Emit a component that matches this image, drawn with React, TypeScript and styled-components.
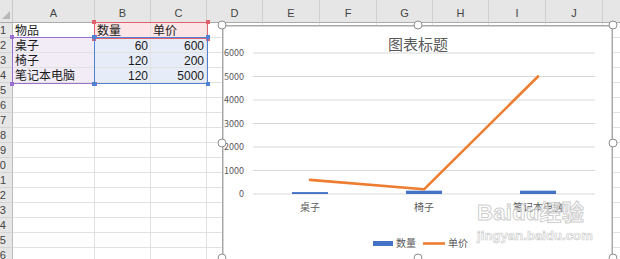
import styled, { createGlobalStyle } from "styled-components";

const GlobalStyle = createGlobalStyle`
  html, body {
    margin: 0;
    padding: 0;
    background: #ffffff;
    overflow: hidden;
  }
`;

const COLS = [
  { key: "A", w: 82 },
  { key: "B", w: 56 },
  { key: "C", w: 56 },
  { key: "D", w: 56 },
  { key: "E", w: 57 },
  { key: "F", w: 57 },
  { key: "G", w: 56 },
  { key: "H", w: 56 },
  { key: "I", w: 57 },
  { key: "J", w: 57 },
  { key: "K", w: 60 },
];
const ROW_COUNT = 16;

type Tone = "red" | "purple" | "blue";
type CellData = { text: string | number; tone?: Tone; num?: boolean };

const DATA: CellData[][] = [
  [{ text: "物品" }, { text: "数量", tone: "red" }, { text: "单价", tone: "red" }],
  [{ text: "桌子", tone: "purple" }, { text: 60, tone: "blue", num: true }, { text: 600, tone: "blue", num: true }],
  [{ text: "椅子", tone: "purple" }, { text: 120, tone: "blue", num: true }, { text: 200, tone: "blue", num: true }],
  [{ text: "笔记本电脑", tone: "purple" }, { text: 120, tone: "blue", num: true }, { text: 5000, tone: "blue", num: true }],
];

const FILL: Record<Tone, string> = {
  red: "#fbe5e6",
  purple: "#f1ecf6",
  blue: "#e7edf8",
};
const LINE: Record<Tone, string> = {
  red: "#e0606b",
  purple: "#9a6fcf",
  blue: "#4f82d6",
};

const Page = styled.div`
  position: relative;
  width: 620px;
  height: 259px;
  overflow: hidden;
  font-family: "Liberation Sans", "Noto Sans CJK SC", sans-serif;
`;

const Sheet = styled.div`
  display: grid;
  grid-template-columns: 13px ${COLS.map((c) => c.w + "px").join(" ")};
  grid-template-rows: 23px repeat(${ROW_COUNT}, 15px);
`;

const Corner = styled.div`
  position: relative;
  background: #e6e6e6;
  border-right: 1px solid #c9c9c9;
  border-bottom: 1px solid #ababab;
  &::after {
    content: "";
    position: absolute;
    right: 2px;
    bottom: 3px;
    border-left: 8px solid transparent;
    border-bottom: 8px solid #b8b8b8;
  }
`;

const ColHead = styled.div`
  display: flex;
  align-items: flex-end;
  justify-content: center;
  padding-bottom: 2px;
  box-sizing: border-box;
  background: #e6e6e6;
  border-right: 1px solid #d0d0d0;
  border-bottom: 1px solid #ababab;
  font-size: 11px;
  color: #444444;
  line-height: 14px;
`;

const RowHead = styled.div`
  display: flex;
  align-items: center;
  justify-content: flex-end;
  overflow: hidden;
  padding-right: 6px;
  box-sizing: border-box;
  background: #e6e6e6;
  border-right: 1px solid #bdbdbd;
  border-bottom: 1px solid #d4d4d4;
  font-size: 11px;
  color: #444444;
  line-height: 14px;
`;

const Cell = styled.div<{ $tone?: Tone; $num?: boolean }>`
  display: flex;
  align-items: center;
  justify-content: ${(p) => (p.$num ? "flex-end" : "flex-start")};
  padding: 1px 2px 0 2px;
  box-sizing: border-box;
  background: ${(p) => (p.$tone ? FILL[p.$tone] : "#ffffff")};
  border-right: 1px solid #e1e1e1;
  border-bottom: 1px solid #e1e1e1;
  font-size: 12px;
  color: #1a1a1a;
  white-space: nowrap;
  overflow: visible;
  line-height: 14px;
`;

// outline of a referenced data range, drawn over the cells
const Range = styled.div<{ $tone: Tone; $x: number; $y: number; $w: number; $h: number }>`
  position: absolute;
  left: ${(p) => p.$x}px;
  top: ${(p) => p.$y}px;
  width: ${(p) => p.$w}px;
  height: ${(p) => p.$h}px;
  box-sizing: border-box;
  border: 1.5px solid ${(p) => LINE[p.$tone]};
  pointer-events: none;
`;

const Knob = styled.span<{ $tone: Tone; $at: string }>`
  position: absolute;
  width: 4px;
  height: 4px;
  background: ${(p) => LINE[p.$tone]};
  ${(p) => (p.$at.includes("t") ? "top: -3px;" : "bottom: -3px;")}
  ${(p) => (p.$at.includes("l") ? "left: -3px;" : "right: -3px;")}
`;

// floating chart object over the sheet
const ChartBox = styled.div`
  position: absolute;
  left: 222px;
  top: 25px;
  width: 391px;
  height: 236px;
  background: #ffffff;
  box-shadow: inset 0 0 0 1.5px #a9a9a9;
  svg {
    display: block;
  }
`;

const Handle = styled.span<{ $x: number; $y: number }>`
  position: absolute;
  left: ${(p) => p.$x}%;
  top: ${(p) => p.$y}px;
  width: 7px;
  height: 7px;
  transform: translate(-50%, -50%);
  border-radius: 50%;
  border: 1.5px solid #8e8e8e;
  background: #ffffff;
`;

const Watermark = styled.div`
  position: absolute;
  left: 477px;
  top: 199px;
  display: flex;
  flex-direction: column;
  align-items: flex-start;
  color: rgba(255, 255, 255, 0.6);
  -webkit-text-stroke: 1px rgba(200, 200, 200, 0.9);
  font-family: "Liberation Sans", "Noto Sans CJK SC", sans-serif;
  font-weight: 700;
  pointer-events: none;
`;

const MarkBig = styled.div`
  font-size: 22px;
  line-height: 28px;
  letter-spacing: 0.3px;
`;

const MarkSmall = styled.div`
  font-size: 13px;
  line-height: 18px;
  letter-spacing: 0.1px;
  -webkit-text-stroke: 0.7px rgba(200, 200, 200, 0.9);
`;

const Y0 = 169;
const STEP = 23.5;
const MAXV = 6000;
const yOf = (v: number) => Y0 - (v / MAXV) * STEP * 6;
const CATS = ["桌子", "椅子", "笔记本电脑"];
const CX = [88, 202, 316];
const QTY = [60, 120, 120];
const PRICE = [600, 200, 5000];

const TXT = "#595959";
const FONT = '"Noto Sans CJK SC", "Liberation Sans", sans-serif';

const Chart = () => (
  <ChartBox>
    <svg width={391} height={236}>
      <text x={196} y={25} fontSize={15} fill={TXT} textAnchor="middle" fontFamily={FONT}>
        图表标题
      </text>
      {[0, 1, 2, 3, 4, 5, 6].map((k) => {
        const y = Y0 - k * STEP;
        return (
          <g key={k}>
            <line x1={31} x2={373} y1={y} y2={y} stroke="#d9d9d9" strokeWidth={1} />
            <text x={22} y={y + 3.2} fontSize={9} fill={TXT} textAnchor="end" fontFamily={FONT}>
              {k * 1000}
            </text>
          </g>
        );
      })}
      {CX.map((x, i) => (
        <rect key={"b" + i} x={x - 18} y={yOf(QTY[i]) - 0.5} width={36} height={Y0 - yOf(QTY[i]) + 0.5} fill="#4472c4" />
      ))}
      <polyline
        points={CX.map((x, i) => `${x},${yOf(PRICE[i])}`).join(" ")}
        fill="none"
        stroke="#ed7d31"
        strokeWidth={2.6}
        strokeLinejoin="round"
        strokeLinecap="round"
      />
      {CX.map((x, i) => (
        <text key={"c" + i} x={x} y={186} fontSize={10} fill={TXT} textAnchor="middle" fontFamily={FONT}>
          {CATS[i]}
        </text>
      ))}
      <rect x={151} y={216} width={20} height={5} fill="#4472c4" />
      <text x={174} y={222} fontSize={10} fill={TXT} fontFamily={FONT}>
        数量
      </text>
      <line x1={201} x2={223} y1={218.5} y2={218.5} stroke="#ed7d31" strokeWidth={2.6} />
      <text x={226} y={222} fontSize={10} fill={TXT} fontFamily={FONT}>
        单价
      </text>
    </svg>
    <Handle $x={0} $y={0} />
    <Handle $x={50} $y={0} />
    <Handle $x={100} $y={0} />
    <Handle $x={0} $y={118} />
    <Handle $x={100} $y={118} />
    <Handle $x={0} $y={233} />
    <Handle $x={50} $y={233} />
    <Handle $x={100} $y={233} />
  </ChartBox>
);

const RangeBox = ({ tone, x, y, w, h }: { tone: Tone; x: number; y: number; w: number; h: number }) => (
  <Range $tone={tone} $x={x} $y={y} $w={w} $h={h}>
    <Knob $tone={tone} $at="tl" />
    <Knob $tone={tone} $at="tr" />
    <Knob $tone={tone} $at="bl" />
    <Knob $tone={tone} $at="br" />
  </Range>
);

export default function App() {
  return (
    <Page>
      <GlobalStyle />
      <Sheet>
        <Corner />
        {COLS.map((c) => (
          <ColHead key={c.key}>{c.key}</ColHead>
        ))}
        {Array.from({ length: ROW_COUNT }, (_, r) => [
          <RowHead key={"r" + r}>{r + 1}</RowHead>,
          ...COLS.map((c, ci) => {
            const d = DATA[r]?.[ci];
            return (
              <Cell key={c.key + r} $tone={d?.tone} $num={d?.num}>
                {d ? d.text : ""}
              </Cell>
            );
          }),
        ])}
      </Sheet>
      <RangeBox tone="red" x={94} y={22} w={114} h={17} />
      <RangeBox tone="purple" x={12} y={37} w={83} h={47} />
      <RangeBox tone="blue" x={94} y={37} w={114} h={47} />
      <Chart />
      <Watermark>
        <MarkBig>Baidu经验</MarkBig>
        <MarkSmall>jingyan.baidu.com</MarkSmall>
      </Watermark>
    </Page>
  );
}
